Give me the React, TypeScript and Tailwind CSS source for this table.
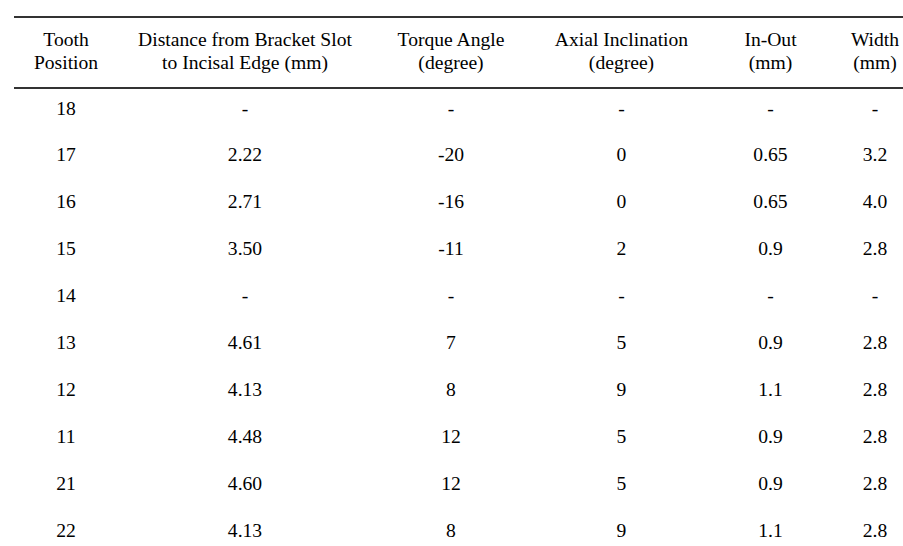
const headers: [string, string][] = [
  ["Tooth", "Position"],
  ["Distance from Bracket Slot", "to Incisal Edge (mm)"],
  ["Torque Angle", "(degree)"],
  ["Axial Inclination", "(degree)"],
  ["In-Out", "(mm)"],
  ["Width", "(mm)"],
];

const colWidths = [104, 254, 158, 183, 115, 94];

const rows: string[][] = [
  ["18", "-", "-", "-", "-", "-"],
  ["17", "2.22", "-20", "0", "0.65", "3.2"],
  ["16", "2.71", "-16", "0", "0.65", "4.0"],
  ["15", "3.50", "-11", "2", "0.9", "2.8"],
  ["14", "-", "-", "-", "-", "-"],
  ["13", "4.61", "7", "5", "0.9", "2.8"],
  ["12", "4.13", "8", "9", "1.1", "2.8"],
  ["11", "4.48", "12", "5", "0.9", "2.8"],
  ["21", "4.60", "12", "5", "0.9", "2.8"],
  ["22", "4.13", "8", "9", "1.1", "2.8"],
];

export default function App() {
  return (
    <div className="w-[903px] h-[546px] overflow-hidden bg-white pt-[16px] pl-[14px] font-[family-name:'Liberation_Serif',serif] text-[19.6px] text-black">
      <table className="w-[908px] table-fixed border-collapse">
        <colgroup>
          {colWidths.map((w, i) => (
            <col key={i} style={{ width: w }} />
          ))}
        </colgroup>
        <thead>
          <tr className="border-y-2 border-[#333]">
            {headers.map(([a, b]) => (
              <th
                key={a}
                className="pt-[10px] pb-[13px] text-center font-normal leading-[23px] whitespace-nowrap"
              >
                {a}
                <br />
                {b}
              </th>
            ))}
          </tr>
        </thead>
        <tbody>
          {rows.map((row) => (
            <tr key={row[0]}>
              {row.map((cell, i) => (
                <td
                  key={i}
                  className="h-[47px] pt-[8px] align-top text-center leading-[23px]"
                >
                  {cell}
                </td>
              ))}
            </tr>
          ))}
        </tbody>
      </table>
    </div>
  );
}
